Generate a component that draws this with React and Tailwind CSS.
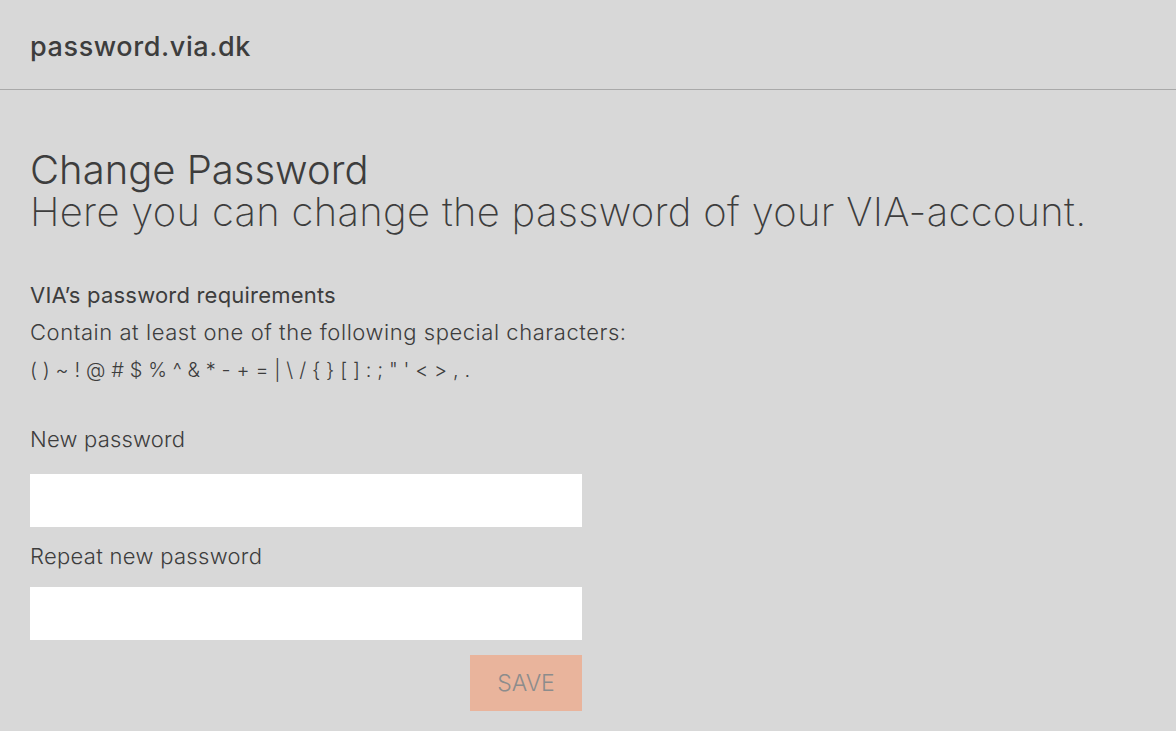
export default function App() {
  return (
    <div className="min-h-screen bg-[#d8d8d8] text-[#3d3d3d] font-['Inter','Liberation_Sans',sans-serif]">
      {/* Header */}
      <header className="h-[90px] border-b border-[#a9a9a9] flex items-center px-[30px]">
        <span className="text-[27px] font-medium tracking-[0.6px] pt-[6px]">password.via.dk</span>
      </header>

      <main className="px-[30px] pt-[59px]">
        <h1 className="text-[40px] font-light leading-[42px]">Change Password</h1>
        <p className="text-[40px] font-extralight leading-[42px] tracking-[0.3px]">Here you can change the password of your VIA-account.</p>

        <div className="mt-[47px]">
          <h2 className="text-[22px] font-normal leading-[30px] tracking-[0.2px]">VIA’s password requirements</h2>
          <p className="text-[22px] font-light leading-[30px] mt-[7px] tracking-[0.55px]">Contain at least one of the following special characters:</p>
          <p className="text-[20px] font-light leading-[30px] mt-[8px] tracking-[0.1px]">( ) ~ ! @ # $ % ^ &amp; * - + = | \ / {"{ }"} [ ] : ; " ' &lt; &gt; , .</p>
        </div>

        <form className="w-[552px] mt-[39px]" onSubmit={(e) => e.preventDefault()}>
          <label className="block text-[22px] font-light leading-[30px] tracking-[0.2px]">New password</label>
          <input type="password" className="block w-full h-[53px] bg-white mt-[20px] outline-none px-3" />
          <label className="block text-[22px] font-light leading-[30px] mt-[14px] tracking-[0.3px]">Repeat new password</label>
          <input type="password" className="block w-full h-[53px] bg-white mt-[16px] outline-none px-3" />
          <div className="flex justify-end mt-[15px]">
            <button type="submit" className="w-[112px] h-[56px] bg-[#e9b49c] text-[#8c8c8c] text-[23px] font-light">SAVE</button>
          </div>
        </form>
      </main>
    </div>
  )
}
